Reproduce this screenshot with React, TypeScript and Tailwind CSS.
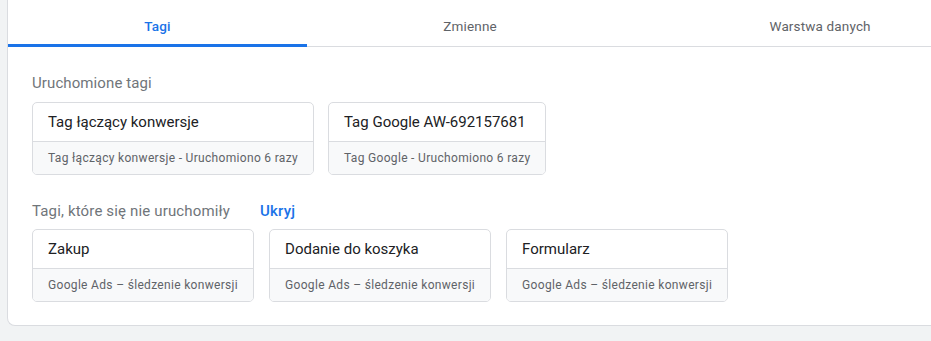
import React from "react";

const font = { fontFamily: "Roboto, 'Noto Sans', Arial, sans-serif" };

function Card({ title, sub }: { title: string; sub: string }) {
  return (
    <div className="flex flex-col rounded-[5px] border border-[#dadce0] bg-white overflow-hidden">
      <div className="h-[39px] flex items-center px-[15px] text-[15px] text-[#202124] border-b border-[#dadce0]">
        {title}
      </div>
      <div className="h-[32px] flex items-center px-[15px] text-[12px] tracking-[0.32px] text-[#5f6368] bg-[#f8f9fa]">
        {sub}
      </div>
    </div>
  );
}

export default function App() {
  return (
    <div className="w-[931px] h-[341px] bg-[#f1f3f4] overflow-hidden" style={font}>
      <div className="ml-[7px] w-[1000px] h-[326px] bg-white border-l border-b border-[#dadce0] rounded-bl-[8px] flex flex-col">
        <div className="flex h-[47px] border-b border-[#dadce0]">
          <div className="relative grow flex items-center justify-center pt-[7px] text-[13.5px] tracking-[0.15px] font-medium text-[#1a73e8]">
            Tagi
            <div className="absolute left-0 right-0 bottom-[-1px] h-[3px] bg-[#1a73e8]" />
          </div>
          <div className="grow flex items-center justify-center pt-[7px] text-[13.5px] tracking-[0.15px] text-[#5f6368]">
            Zmienne
          </div>
          <div className="grow flex items-center justify-center pt-[7px] text-[13.5px] tracking-[0.15px] text-[#5f6368]">
            Warstwa danych
          </div>
        </div>
        <div className="pl-[24px] pt-[26px] flex flex-col">
          <div className="text-[15px] leading-[20px] tracking-[0.1px] text-[#70757a] mb-[9px]">Uruchomione tagi</div>
          <div className="flex gap-[14px]">
            <Card title="Tag łączący konwersje" sub="Tag łączący konwersje - Uruchomiono 6 razy" />
            <Card title="Tag Google AW-692157681" sub="Tag Google - Uruchomiono 6 razy" />
          </div>
          <div className="flex items-center gap-[30px] mt-[26px] mb-[8px]">
            <div className="text-[15px] leading-[20px] tracking-[0.15px] text-[#70757a]">Tagi, które się nie uruchomiły</div>
            <div className="text-[15px] leading-[20px] tracking-[0.2px] font-medium text-[#1a73e8]">Ukryj</div>
          </div>
          <div className="flex gap-[15px]">
            <Card title="Zakup" sub="Google Ads – śledzenie konwersji" />
            <Card title="Dodanie do koszyka" sub="Google Ads – śledzenie konwersji" />
            <Card title="Formularz" sub="Google Ads – śledzenie konwersji" />
          </div>
        </div>
      </div>
    </div>
  );
}
